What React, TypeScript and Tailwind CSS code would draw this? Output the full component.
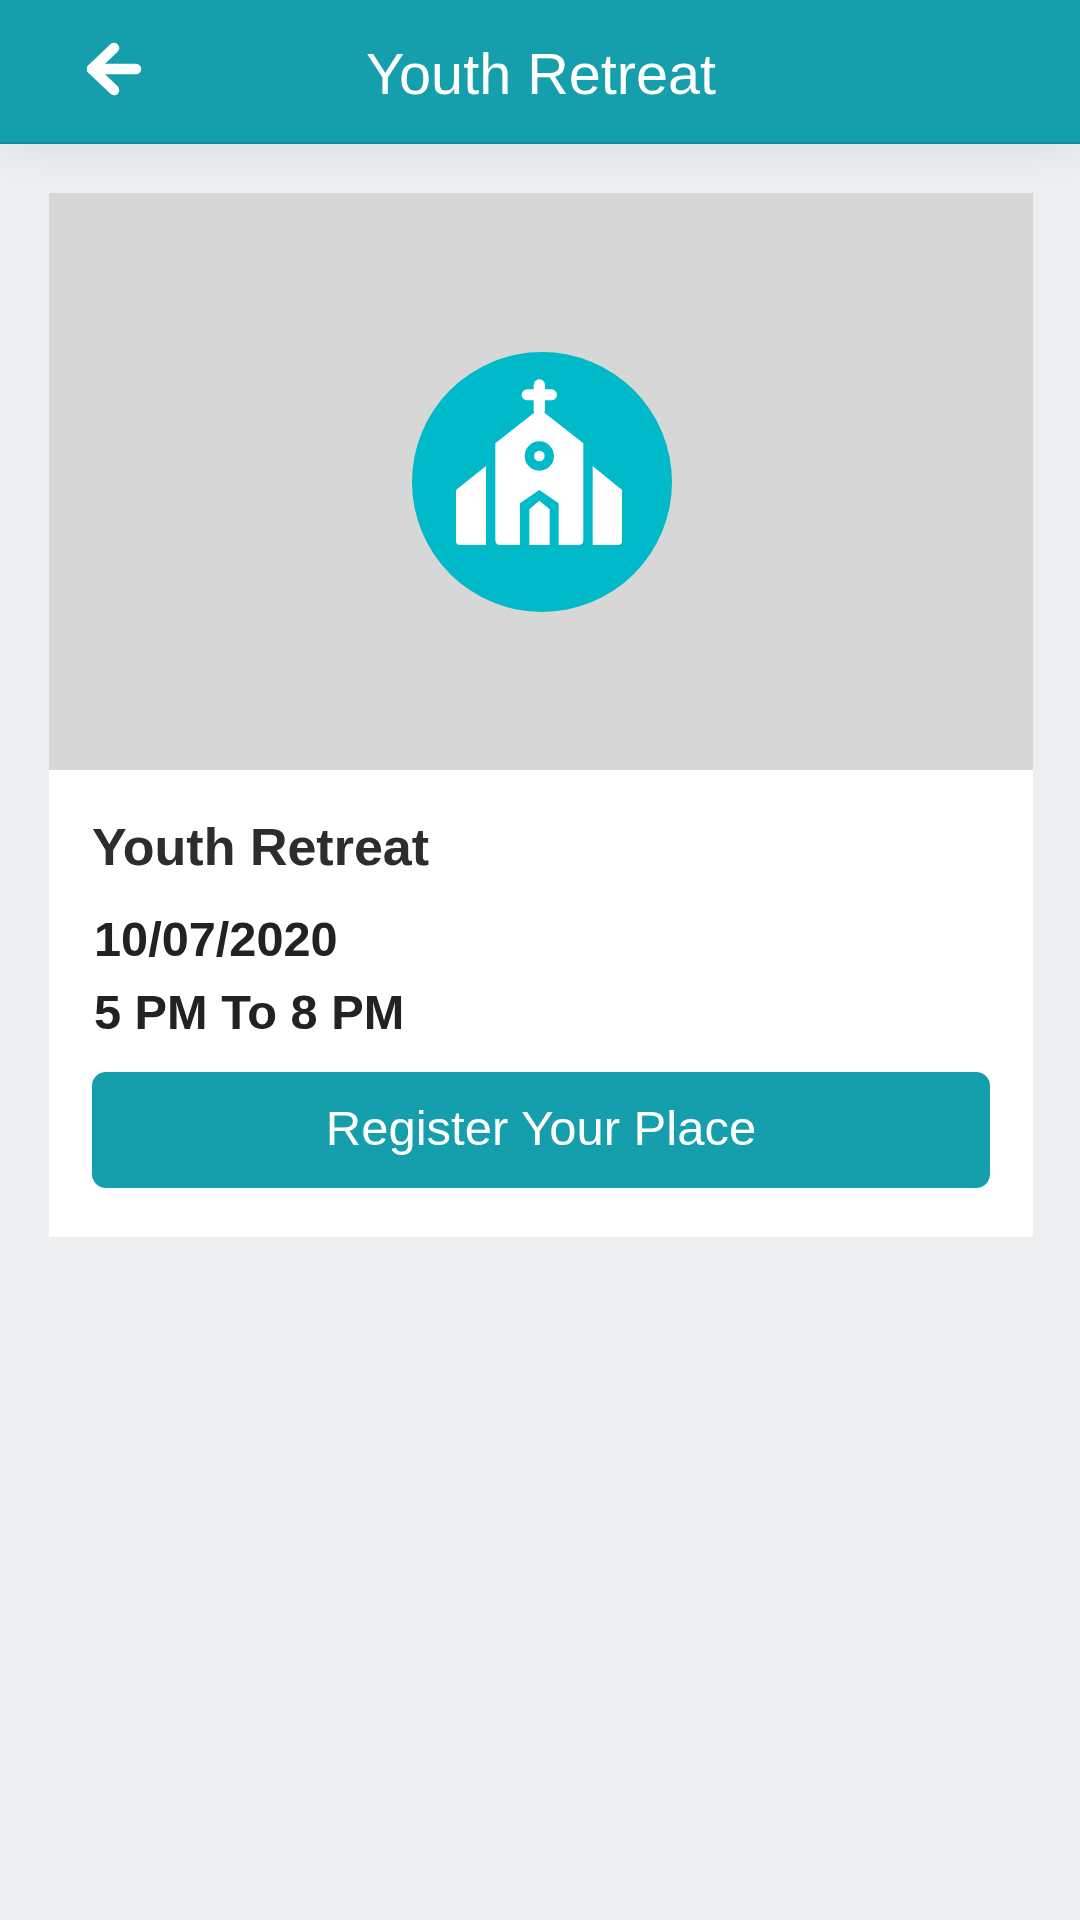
export default function App() {
  return (
    <div className="min-h-[1920px] bg-[#eceef0] font-['Liberation_Sans',Arial,sans-serif]">
      <header className="relative grid h-[144px] grid-cols-[1fr_auto_1fr] items-center border-b-2 border-[#0f8b97] bg-[#159eac] shadow-[0_6px_40px_rgba(0,0,0,0.07)]">
        <div className="pb-[4px] pl-[85px]">
          <svg width="58" height="64" viewBox="0 0 58 64" fill="none" stroke="white" strokeWidth="10.5" strokeLinecap="round" strokeLinejoin="round">
            <path d="M7 32H51" />
            <path d="M29 11L7 32L29 53" />
          </svg>
        </div>
        <h1 className="pt-[8px] pl-[2px] text-[57.6px] leading-none text-white">Youth Retreat</h1>
        <div />
      </header>

      <main className="relative pt-[49px] pr-[47px] pl-[49px]">
        <div className="bg-white">
          <div className="flex h-[577px] items-center justify-center bg-[#d7d7d7] pl-[2px]">
            <ChurchBadge />
          </div>
          <div className="px-[43px] pt-[51px] pb-[49px]">
            <h2 className="text-[52px] leading-none font-bold text-[#2d2d2d]">Youth Retreat</h2>
            <p className="mt-[30px] pl-[2px] text-[48.7px] leading-[73px] font-bold text-[#222222]">10/07/2020</p>
            <p className="pl-[2px] text-[48.7px] leading-[73px] font-bold text-[#222222]">5 PM To 8 PM</p>
            <button className="mt-[23px] block h-[116px] w-full rounded-[14px] bg-[#159eac] pb-[3px] text-[49px] leading-none text-white">
              Register Your Place
            </button>
          </div>
        </div>
      </main>
    </div>
  )
}

function ChurchBadge() {
  return (
    <svg width="260" height="260" viewBox="38 36 780 780" fill="white">
      <circle cx="428" cy="426" r="390" fill="#00b9c9" />
      {/* cross */}
      <rect x="403" y="118" width="34" height="110" rx="17" />
      <rect x="367" y="148" width="106" height="33" rx="16.5" />
      {/* main building */}
      <path d="M420 206L552 310V600Q552 615 537 615H478V490L420 450L362 490V615H303Q288 615 288 600V310Z" />
      <circle cx="420" cy="348" r="30" fill="none" stroke="#00b9c9" strokeWidth="28" />
      <path d="M390 508L420 482L451 508V615H390Z" />
      {/* side wings */}
      <path d="M260 378V615H182Q170 615 170 603V450Z" />
      <path d="M580 378V615H656Q668 615 668 603V450Z" />
    </svg>
  )
}
